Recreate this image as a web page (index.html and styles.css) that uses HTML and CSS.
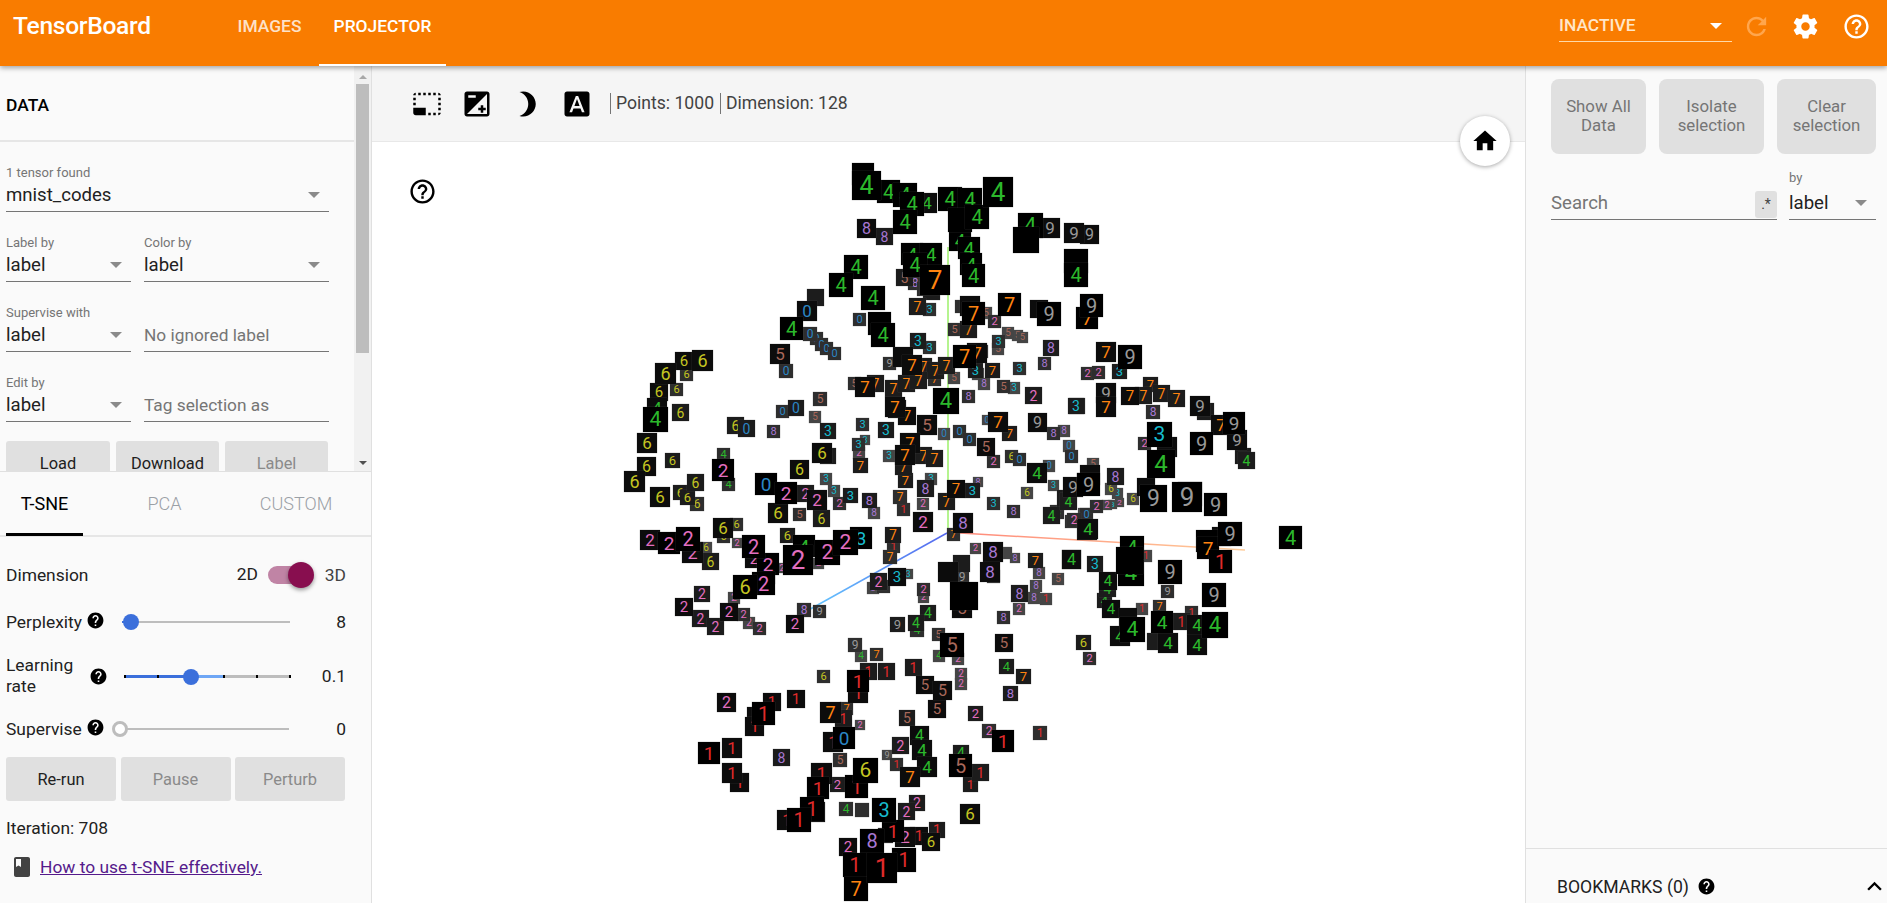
FILE: index.html
```html
<!DOCTYPE html>
<html lang="en">
<head>
    <meta charset="UTF-8">
    <title>TensorBoard</title>
    <link rel="stylesheet" href="styles.css">
</head>
<body>

<div class="app">
    <!-- top bar -->
    <header class="topbar">
        <div class="logo">TensorBoard</div>
        <a class="top-tab">IMAGES</a>
        <a class="top-tab active">PROJECTOR</a>
        <div class="top-right">
            <div class="run-select">
                <span>INACTIVE</span>
                <i class="caret caret-white"></i>
            </div>
            <svg class="icon-top refresh" viewBox="0 0 24 24"><path d="M17.65 6.35C16.2 4.9 14.21 4 12 4c-4.42 0-7.99 3.58-7.99 8s3.57 8 7.99 8c3.73 0 6.84-2.55 7.73-6h-2.08c-.82 2.33-3.04 4-5.65 4-3.31 0-6-2.69-6-6s2.69-6 6-6c1.66 0 3.14.69 4.22 1.78L13 11h7V4l-2.35 2.35z"/></svg>
            <svg class="icon-top" viewBox="0 0 24 24"><path d="M19.43 12.98c.04-.32.07-.64.07-.98s-.03-.66-.07-.98l2.11-1.65c.19-.15.24-.42.12-.64l-2-3.46c-.12-.22-.39-.3-.61-.22l-2.49 1c-.52-.4-1.08-.73-1.69-.98l-.38-2.65C14.46 2.18 14.25 2 14 2h-4c-.25 0-.46.18-.49.42l-.38 2.65c-.61.25-1.17.59-1.69.98l-2.49-1c-.23-.09-.49 0-.61.22l-2 3.46c-.13.22-.07.49.12.64l2.11 1.65c-.04.32-.07.65-.07.98s.03.66.07.98l-2.11 1.65c-.19.15-.24.42-.12.64l2 3.46c.12.22.39.3.61.22l2.49-1c.52.4 1.08.73 1.69.98l.38 2.65c.03.24.24.42.49.42h4c.25 0 .46-.18.49-.42l.38-2.65c.61-.25 1.17-.59 1.69-.98l2.49 1c.23.09.49 0 .61-.22l2-3.46c.12-.22.07-.49-.12-.64l-2.11-1.65zM12 15.5c-1.93 0-3.5-1.57-3.5-3.5s1.57-3.5 3.5-3.5 3.5 1.57 3.5 3.5-1.57 3.5-3.5 3.5z"/></svg>
            <svg class="icon-top" viewBox="0 0 24 24"><path d="M11 18h2v-2h-2v2zm1-16C6.48 2 2 6.48 2 12s4.48 10 10 10 10-4.48 10-10S17.52 2 12 2zm0 18c-4.41 0-8-3.59-8-8s3.59-8 8-8 8 3.59 8 8-3.59 8-8 8zm0-14c-2.21 0-4 1.79-4 4h2c0-1.1.9-2 2-2s2 .9 2 2c0 2-3 1.75-3 5h2c0-2.25 3-2.5 3-5 0-2.21-1.79-4-4-4z"/></svg>
        </div>
    </header>

    <main class="main">
        <!-- left panel -->
        <aside class="left">
            <section class="data-section">
                <div class="data-body">
                    <div class="data-title">DATA</div>
                    <div class="fields">
                        <div class="field field-wide">
                            <label>1 tensor found</label>
                            <div class="value">mnist_codes<i class="caret"></i></div>
                        </div>
                        <div class="field-row">
                            <div class="field">
                                <label>Label by</label>
                                <div class="value">label<i class="caret"></i></div>
                            </div>
                            <div class="field">
                                <label>Color by</label>
                                <div class="value">label<i class="caret"></i></div>
                            </div>
                        </div>
                        <div class="field-row">
                            <div class="field">
                                <label>Supervise with</label>
                                <div class="value">label<i class="caret"></i></div>
                            </div>
                            <div class="field">
                                <label>&nbsp;</label>
                                <div class="value placeholder">No ignored label</div>
                            </div>
                        </div>
                        <div class="field-row">
                            <div class="field">
                                <label>Edit by</label>
                                <div class="value">label<i class="caret"></i></div>
                            </div>
                            <div class="field">
                                <label>&nbsp;</label>
                                <div class="value placeholder">Tag selection as</div>
                            </div>
                        </div>
                        <div class="data-buttons">
                            <button>Load</button>
                            <button>Download</button>
                            <button class="disabled">Label</button>
                        </div>
                    </div>
                </div>
                <div class="scrollbar">
                    <i class="arrow-up"></i>
                    <div class="thumb"></div>
                    <i class="arrow-down"></i>
                </div>
            </section>

            <section class="tsne-section">
                <div class="algo-tabs">
                    <div class="algo-tab active">T-SNE</div>
                    <div class="algo-tab">PCA</div>
                    <div class="algo-tab tab-custom">CUSTOM</div>
                </div>

                <div class="row row-dimension">
                    <span class="row-label">Dimension</span>
                    <span class="dim-2d">2D</span>
                    <div class="toggle"><i class="toggle-knob"></i></div>
                    <span class="dim-3d">3D</span>
                </div>

                <div class="row row-perplexity">
                    <span class="row-label">Perplexity</span>
                    <svg class="icon-help" viewBox="0 0 24 24"><use href="#help-filled"/></svg>
                    <div class="slider slider-perplexity"><i class="fill"></i><i class="knob"></i></div>
                    <span class="row-value">8</span>
                </div>

                <div class="row row-learning">
                    <span class="row-label">Learning rate</span>
                    <svg class="icon-help" viewBox="0 0 24 24"><use href="#help-filled"/></svg>
                    <div class="slider slider-learning">
                        <i class="fill"></i><i class="fill-light"></i>
                        <i class="tick t0"></i><i class="tick t1"></i><i class="tick t3"></i><i class="tick t4"></i><i class="tick t5"></i>
                        <i class="knob"></i>
                    </div>
                    <span class="row-value">0.1</span>
                </div>

                <div class="row row-supervise">
                    <span class="row-label">Supervise</span>
                    <svg class="icon-help" viewBox="0 0 24 24"><use href="#help-filled"/></svg>
                    <div class="slider slider-supervise"><i class="knob"></i></div>
                    <span class="row-value">0</span>
                </div>

                <div class="tsne-buttons">
                    <button>Re-run</button>
                    <button class="disabled">Pause</button>
                    <button class="disabled">Perturb</button>
                </div>

                <div class="iteration">Iteration: 708</div>
                <div class="howto">
                    <svg class="icon-book" viewBox="0 0 24 24"><path d="M18 2H6c-1.1 0-2 .9-2 2v16c0 1.1.9 2 2 2h12c1.1 0 2-.9 2-2V4c0-1.1-.9-2-2-2zM6 4h5v8l-2.5-1.5L6 12V4z"/></svg>
                    <a href="#">How to use t-SNE effectively.</a>
                </div>
            </section>
        </aside>

        <!-- center view -->
        <section class="center">
            <div class="toolbar">
                <svg class="icon-tool" viewBox="0 0 24 24"><path d="M23 15h-2v2h2v-2zm0-4h-2v2h2v-2zm0 8h-2v2c1 0 2-1 2-2zM15 3h-2v2h2V3zm8 4h-2v2h2V7zm-2-4v2h2c0-1-1-2-2-2zM3 21h8v-6H1v4c0 1.1.9 2 2 2zM3 7H1v2h2V7zm12 12h-2v2h2v-2zm4-16h-2v2h2V3zm0 16h-2v2h2v-2zM3 3C2 3 1 4 1 5h2V3zm0 8H1v2h2v-2zm8-8H9v2h2V3zM7 3H5v2h2V3z"/></svg>
                <svg class="icon-tool" viewBox="0 0 24 24"><path d="M15 17v2h2v-2h2v-2h-2v-2h-2v2h-2v2h2zm5-15H4c-1.1 0-2 .9-2 2v16c0 1.1.9 2 2 2h16c1.1 0 2-.9 2-2V4c0-1.1-.9-2-2-2zM5 5h6v2H5V5zm15 15H4L20 4v16z"/></svg>
                <svg class="icon-tool" viewBox="0 0 24 24"><path d="M9 2c-1.05 0-2.05.16-3 .46 4.06 1.27 7 5.06 7 9.54 0 4.48-2.94 8.27-7 9.54.95.3 1.95.46 3 .46 5.52 0 10-4.48 10-10S14.52 2 9 2z"/></svg>
                <svg class="icon-tool" viewBox="0 0 24 24"><path d="M9.93 13.5h4.14L12 7.98zM20 2H4c-1.1 0-2 .9-2 2v16c0 1.1.9 2 2 2h16c1.1 0 2-.9 2-2V4c0-1.1-.9-2-2-2zm-4.05 16.5l-1.14-3H9.17l-1.12 3H5.96l5.11-13h1.86l5.11 13h-2.09z"/></svg>
                <div class="stats">
                    <span class="stat">Points: 1000</span>
                    <span class="stat">Dimension: 128</span>
                </div>
            </div>

            <div class="scatter" id="scatter">
                <svg class="axes" viewBox="372 142 1153 761">
                    <defs>
                        <linearGradient id="axis-z" gradientUnits="userSpaceOnUse" x1="947" y1="533" x2="805" y2="612">
                            <stop offset="0" stop-color="#5566ee"/>
                            <stop offset="1" stop-color="#66ccff"/>
                        </linearGradient>
                        <linearGradient id="axis-x" gradientUnits="userSpaceOnUse" x1="960" y1="533" x2="1245" y2="550">
                            <stop offset="0" stop-color="#ff8a7a"/>
                            <stop offset="1" stop-color="#ffcc99"/>
                        </linearGradient>
                    </defs>
                    <line x1="948" y1="247" x2="948" y2="533" stroke="#9cf06a" stroke-width="1.5"/>
                    <line x1="947" y1="533" x2="805" y2="612" stroke="url(#axis-z)" stroke-width="1.5"/>
                    <line x1="960" y1="533" x2="1245" y2="550" stroke="url(#axis-x)" stroke-width="1.5"/>
                </svg>
            </div>

            <svg class="canvas-help" viewBox="0 0 24 24"><path d="M11 18h2v-2h-2v2zm1-16C6.48 2 2 6.48 2 12s4.48 10 10 10 10-4.48 10-10S17.52 2 12 2zm0 18c-4.41 0-8-3.59-8-8s3.59-8 8-8 8 3.59 8 8-3.59 8-8 8zm0-14c-2.21 0-4 1.79-4 4h2c0-1.1.9-2 2-2s2 .9 2 2c0 2-3 1.75-3 5h2c0-2.25 3-2.5 3-5 0-2.21-1.79-4-4-4z"/></svg>
            <div class="home-btn">
                <svg viewBox="0 0 24 24"><path d="M10 20v-6h4v6h5v-8h3L12 3 2 12h3v8z"/></svg>
            </div>
        </section>

        <!-- right panel -->
        <aside class="right">
            <div class="right-buttons">
                <button class="btn-show">Show All Data</button>
                <button class="btn-isolate">Isolate selection</button>
                <button class="btn-clear">Clear selection</button>
            </div>
            <div class="search-row">
                <div class="search">
                    <span class="placeholder">Search</span>
                    <span class="regex">.*</span>
                </div>
                <div class="field search-by">
                    <label>by</label>
                    <div class="value">label<i class="caret"></i></div>
                </div>
            </div>
            <div class="bookmarks">
                <span>BOOKMARKS (0)</span>
                <svg class="icon-help" viewBox="0 0 24 24"><use href="#help-filled"/></svg>
                <svg class="chevron" viewBox="0 0 24 24"><path d="M12 8l-6 6 1.41 1.41L12 10.83l4.59 4.58L18 14z"/></svg>
            </div>
        </aside>
    </main>
</div>

<svg class="defs-only"><defs>
    <path id="help-filled" d="M12 2C6.48 2 2 6.48 2 12s4.48 10 10 10 10-4.48 10-10S17.52 2 12 2zm1 17h-2v-2h2v2zm2.07-7.75l-.9.92C13.45 12.9 13 13.5 13 15h-2v-.5c0-1.1.45-2.1 1.17-2.83l1.24-1.26c.37-.36.59-.86.59-1.41 0-1.1-.9-2-2-2s-2 .9-2 2H8c0-2.21 1.79-4 4-4s4 1.79 4 4c0 .88-.36 1.68-.93 2.25z"/>
</defs></svg>

<script src="script.js"></script>
</body>
</html>
```

FILE: styles.css
```css
* {
    box-sizing: border-box;
}

html, body {
    margin: 0;
    padding: 0;
    height: 100%;
    overflow: hidden;
}

body {
    font-family: Roboto, 'Liberation Sans', sans-serif;
    font-size: 17.4px;
    color: #212121;
    background: #fff;
}

button {
    font: inherit;
    font-size: 16.4px;
    border: none;
    background: #e0e0e0;
    color: #212121;
    border-radius: 3px;
}

button.disabled {
    color: #8a8a8a;
}

.defs-only {
    position: absolute;
    width: 0;
    height: 0;
}

.app {
    height: 903px;
    display: flex;
    flex-direction: column;
}

/* top bar */
.topbar {
    height: 66px;
    flex: none;
    display: flex;
    background: #f97c00;
    color: #fff;
    box-shadow: 0 2px 5px rgba(0, 0, 0, 0.35);
    position: relative;
    z-index: 5;
}

.logo {
    width: 220px;
    padding: 11px 0 0 13px;
    font-size: 24.6px;
    font-weight: 500;
    line-height: 30px;
    letter-spacing: -0.3px;
}

.top-tab {
    width: 99px;
    padding-top: 14px;
    font-weight: 500;
    line-height: 24px;
    text-align: center;
    color: rgba(255, 255, 255, 0.8);
}

.top-tab.active {
    width: 127px;
    color: #fff;
    border-bottom: 2px solid #fff;
}

.top-right {
    margin-left: auto;
    padding-right: 16px;
    display: flex;
    align-items: flex-start;
}

.run-select {
    width: 173px;
    height: 42px;
    padding-top: 14px;
    line-height: 22px;
    font-weight: 500;
    border-bottom: 1px solid #ffd9a8;
    display: flex;
    justify-content: space-between;
    color: #ffe6c8;
    margin-right: 10px;
}

.icon-top {
    width: 29px;
    height: 29px;
    margin: 12px 0 0 22px;
    fill: #fff;
}

.icon-top.refresh {
    margin-left: 0;
    fill: #ffa64d;
    margin-right: -2px;
}

.caret {
    display: block;
    width: 0;
    height: 0;
    margin-top: 9px;
    margin-right: 9px;
    border-left: 6px solid transparent;
    border-right: 6px solid transparent;
    border-top: 6px solid #8a8a8a;
}

.caret-white {
    margin-right: 10px;
    border-top-color: #fff;
}

.main {
    flex: 1;
    min-height: 0;
    display: flex;
}

/* left panel */
.left {
    width: 372px;
    flex: none;
    display: flex;
    flex-direction: column;
    background: #fafafa;
    border-right: 1px solid #e0e0e0;
}

.data-section {
    height: 406px;
    flex: none;
    display: flex;
    overflow: hidden;
    border-bottom: 1px solid #e0e0e0;
}

.data-body {
    width: 354px;
    flex: none;
}

.data-title {
    height: 76px;
    padding: 27px 0 0 6px;
    font-weight: 500;
    line-height: 24px;
    color: #000;
    border-bottom: 2px solid #e6e6e6;
}

.fields {
    padding: 22px 25px 0 6px;
    display: flex;
    flex-direction: column;
    gap: 22px;
}

.field-row {
    display: grid;
    grid-template-columns: 125px 185px;
    gap: 13px;
}

.field label {
    display: block;
    height: 17px;
    font-size: 13px;
    line-height: 17px;
    color: #757575;
}

.value {
    height: 31px;
    font-size: 18.6px;
    line-height: 28px;
    color: #212121;
    border-bottom: 1px solid #757575;
    display: flex;
    justify-content: space-between;
}

.value.placeholder {
    font-size: 17.3px;
}

.value .caret {
    margin-top: 11px;
}

.placeholder {
    color: #757575;
}

.data-buttons {
    display: grid;
    grid-template-columns: 104px 103px 103px;
    gap: 6px;
    margin-top: -3px;
}

.data-buttons button {
    height: 44px;
}

.scrollbar {
    width: 17px;
    margin-left: 0;
    background: #f1f1f1;
    position: relative;
    display: flex;
    flex-direction: column;
    align-items: center;
}

.thumb {
    width: 13px;
    height: 269px;
    margin-top: 5px;
    background: #bdbdbd;
}

.arrow-up, .arrow-down {
    display: block;
    width: 0;
    height: 0;
    border-left: 4px solid transparent;
    border-right: 4px solid transparent;
}

.arrow-up {
    margin-top: 9px;
    border-bottom: 4px solid #a8a8a8;
}

.arrow-down {
    margin-top: 108px;
    border-top: 4px solid #505050;
}

/* t-sne section */
.tsne-section {
    flex: 1;
    min-height: 0;
}

.algo-tabs {
    height: 65px;
    padding-left: 6px;
    display: flex;
    gap: 43px;
    border-bottom: 2px solid #e6e6e6;
}

.algo-tab {
    width: 77px;
    height: 64px;
    padding-top: 21px;
    line-height: 22px;
    font-size: 18px;
    text-align: center;
    color: #9aa0a6;
    font-weight: 300;
}

.algo-tab.active {
    color: #000;
    font-weight: 400;
    border-bottom: 3px solid #000;
}

.algo-tab.tab-custom {
    width: 100px;
}

.row {
    display: flex;
    align-items: center;
    padding: 0 25px 0 6px;
}

.row-dimension {
    height: 40px;
    margin-top: 18px;
}

.row-dimension .row-label {
    flex: 1;
}

.dim-2d {
    margin-bottom: 3px;
}

.dim-3d {
    color: #424242;
}

.toggle {
    width: 42px;
    height: 18px;
    margin: 0 15px 0 10px;
    background: #c084a5;
    border-radius: 9px;
    position: relative;
}

.toggle-knob {
    position: absolute;
    top: -4px;
    right: -4px;
    width: 26px;
    height: 26px;
    border-radius: 50%;
    background: #880e4f;
    box-shadow: 0 2px 4px rgba(0, 0, 0, 0.4);
}

.icon-help {
    width: 19px;
    height: 19px;
    flex: none;
    fill: #000;
}

.row-value {
    flex: 1;
    text-align: right;
}

.slider {
    height: 2px;
    background: #bdbdbd;
    position: relative;
    flex: none;
}

.slider i {
    display: block;
    position: absolute;
}

.knob {
    width: 16px;
    height: 16px;
    top: -7px;
    border-radius: 50%;
    background: #3b6fdb;
}

.row-perplexity {
    height: 40px;
    margin-top: 7px;
}

.row-perplexity .icon-help {
    margin: -3px 0 0 4px;
}

.slider-perplexity {
    width: 168px;
    margin-left: 17px;
}

.slider-perplexity .fill {
    left: 0;
    top: 0;
    width: 10px;
    height: 2px;
    background: #3b6fdb;
}

.slider-perplexity .knob {
    left: 1px;
}

.row-learning {
    height: 48px;
    margin-top: 10px;
}

.row-learning .row-label {
    width: 82px;
    line-height: 21px;
    flex: none;
}

.row-learning .icon-help {
    margin-left: 1px;
}

.slider-learning {
    width: 167px;
    height: 3px;
    margin-left: 16px;
}

.slider-learning .fill {
    left: 0;
    top: 0;
    width: 67px;
    height: 3px;
    background: #3b6fdb;
}

.slider-learning .fill-light {
    left: 67px;
    top: 0;
    width: 33px;
    height: 3px;
    background: #6ea6f5;
}

.tick {
    top: 0;
    width: 2px;
    height: 3px;
    background: #000;
}

.t0 { left: 0; }
.t1 { left: 33px; }
.t3 { left: 99px; }
.t4 { left: 132px; }
.t5 { left: 165px; }

.slider-learning .knob {
    left: 59px;
    top: -6px;
}

.row-supervise {
    height: 40px;
    margin-top: 9px;
}

.row-supervise .icon-help {
    margin: -3px 0 0 4px;
}

.slider-supervise {
    width: 170px;
    margin-left: 14px;
}

.slider-supervise .knob {
    left: -7px;
    top: -7px;
    background: #fff;
    border: 3px solid #bdbdbd;
}

.tsne-buttons {
    display: grid;
    grid-template-columns: 110px 110px 110px;
    gap: 4px;
    column-gap: 4.5px;
    margin: 8px 0 0 6px;
}

.tsne-buttons button {
    height: 44px;
}

.iteration {
    margin: 13px 0 0 6px;
    line-height: 28px;
}

.howto {
    display: flex;
    align-items: center;
    margin: 11px 0 0 10px;
    line-height: 28px;
}

.howto a {
    color: #551a8b;
    margin-left: 6px;
}

.icon-book {
    width: 24px;
    height: 24px;
    fill: #424242;
}

/* center */
.center {
    flex: 1;
    min-width: 0;
    position: relative;
    display: flex;
    flex-direction: column;
    overflow: hidden;
}

.toolbar {
    height: 76px;
    flex: none;
    padding: 0 0 0 40px;
    background: #f5f5f5;
    border-bottom: 1px solid #e8e8e8;
    display: flex;
    align-items: center;
    gap: 20px;
}

.icon-tool {
    width: 30px;
    height: 30px;
    fill: #000;
}

.stats {
    display: flex;
    margin-left: -2px;
    font-size: 17.6px;
    color: #424242;
}

.stat {
    height: 21px;
    line-height: 21px;
    padding: 0 6px 0 5px;
    border-left: 1px solid #757575;
}

.scatter {
    flex: 1;
    position: relative;
    background: #fff;
}

.axes {
    position: absolute;
    left: 0;
    top: 0;
    width: 1153px;
    height: 761px;
}

.sprite {
    position: absolute;
    display: flex;
    align-items: center;
    justify-content: center;
    font-family: Roboto, sans-serif;
    font-weight: 400;
    line-height: 1;
    box-shadow: 0 0 1px rgba(90, 90, 90, 0.8);
    overflow: hidden;
}

.canvas-help {
    position: absolute;
    left: 36px;
    top: 111px;
    width: 29px;
    height: 29px;
    fill: #000;
}

.home-btn {
    position: absolute;
    right: 15px;
    top: 50px;
    width: 50px;
    height: 50px;
    border-radius: 50%;
    background: #fff;
    box-shadow: 0 1px 4px rgba(0, 0, 0, 0.35);
    display: flex;
    align-items: center;
    justify-content: center;
}

.home-btn svg {
    width: 28px;
    height: 28px;
    fill: #000;
}

/* right panel */
.right {
    width: 362px;
    flex: none;
    background: #fafafa;
    border-left: 1px solid #e0e0e0;
    display: flex;
    flex-direction: column;
}

.right-buttons {
    display: flex;
    gap: 13px;
    padding: 13px 0 0 25px;
}

.right-buttons button {
    height: 75px;
    padding: 0 12px 2px;
    line-height: 19px;
    font-size: 16.8px;
    border-radius: 8px;
    color: #757575;
}

.btn-show { width: 95px; }
.btn-isolate { width: 105px; }
.btn-clear { width: 99px; }

.search-row {
    display: flex;
    gap: 12px;
    padding: 15px 0 0 25px;
}

.search {
    width: 226px;
    height: 38px;
    margin-top: 13px;
    font-size: 18.6px;
    border-bottom: 1px solid #757575;
    display: flex;
    justify-content: space-between;
    align-items: flex-end;
    line-height: 32px;
}

.regex {
    width: 22px;
    height: 27px;
    margin-bottom: 1px;
    background: #e0e0e0;
    border-radius: 3px;
    font-size: 14px;
    line-height: 27px;
    text-align: center;
    color: #424242;
}

.search-by {
    width: 87px;
    margin-top: 3px;
}

.search-by label {
    margin-top: -3px;
    height: 20px;
}

.bookmarks {
    margin-top: auto;
    height: 55px;
    padding: 21px 0 0 31px;
    border-top: 1px solid #e0e0e0;
    display: flex;
    align-items: center;
    font-size: 17.6px;
    color: #212121;
}

.bookmarks .icon-help {
    margin-left: 8px;
}

.chevron {
    width: 29px;
    height: 29px;
    margin-left: auto;
    margin-right: -2px;
    fill: #000;
}
```

FILE: script.js
```javascript
// projected mnist sprites: x, y, size, digit (page coordinates)
const points = [
    [852,163,22,' '],[852,171,29,4],[877,180,23,4],[893,183,24,4],[900,192,24,4],[917,193,20,4],[938,187,24,4],[958,188,24,4],[983,177,30,4],
    [893,210,24,4],[948,208,24,' '],[965,205,24,4],[857,219,19,8],[876,228,17,8],[1018,213,25,4],[1013,227,26,' '],[1040,218,20,9],[1064,223,20,9],[1080,225,19,9],
    [1064,249,24,' '],[1064,263,24,4],[949,229,22,4],[958,237,22,4],[960,253,22,4],[962,264,23,4],[901,243,22,4],[920,243,22,4],[903,253,24,4],[920,265,30,7],
    [896,269,17,5],[908,276,14,8],[917,282,14,5],[923,283,17,' '],[844,255,24,4],[829,273,24,4],[861,286,24,4],[807,289,17,' '],[797,301,20,0],[780,317,23,4],
    [770,344,20,5],[779,364,14,0],[803,327,14,0],[810,332,13,0],[815,338,13,0],[820,342,13,0],[828,347,13,0],[853,313,13,0],[909,298,17,7],[923,303,13,3],
    [868,312,23,' '],[871,323,24,4],[955,300,13,' '],[960,296,20,' '],[962,302,23,7],[980,307,12,5],[988,315,13,2],[998,293,23,7],[1030,300,18,' '],[1037,302,24,9],
    [1080,294,23,9],[1076,307,22,7],[948,323,13,5],[960,321,17,7],[992,335,13,3],[992,343,12,5],[1002,327,12,5],[1012,330,11,5],[1017,332,11,5],
    [1043,340,16,8],[1038,357,13,8],[1013,362,13,3],[1081,367,13,2],[1092,366,13,2],[1112,364,15,3],[910,333,16,3],[923,341,13,3],[893,347,20,' '],[883,357,13,9],
    [902,355,20,7],[915,358,17,7],[927,362,17,7],[938,357,17,7],[953,345,23,7],[967,343,20,7],[975,345,13,7],[985,363,15,7],[968,363,15,3],[972,368,12,3],
    [848,377,13,5],[855,377,20,7],[867,375,17,7],[885,380,17,7],[898,375,17,7],[910,372,17,7],[928,373,13,7],[948,372,12,5],[933,388,26,4],[962,390,13,8],
    [978,378,12,8],[997,380,13,5],[1008,382,12,3],[1025,387,17,2],[1069,398,16,3],[885,397,20,7],[888,400,18,3],[898,407,18,7],[917,415,20,5],[813,392,14,5],
    [776,405,13,0],[788,400,16,0],[809,411,12,5],[820,423,16,3],[727,417,17,6],[738,420,17,0],[767,425,13,8],[856,418,13,3],[878,422,16,3],[953,425,13,0],
    [963,433,13,0],[938,428,12,0],[988,412,20,7],[1002,426,15,7],[982,415,10,0],[1028,413,19,9],[1047,427,13,8],[1058,425,12,8],[1063,440,12,0],[1065,450,13,0],
    [852,438,13,3],[860,435,10,3],[853,447,12,2],[812,443,20,6],[820,448,16,6],[900,433,20,7],[895,445,20,7],[915,447,17,7],[926,450,17,7],[895,458,17,7],
    [883,450,12,3],[853,458,15,7],[977,438,18,5],[987,455,13,2],[1005,450,13,6],[1013,453,13,0],[1027,463,20,4],[1043,460,12,0],[790,460,19,6],[820,473,12,3],
    [898,473,15,7],[917,480,17,8],[925,473,12,3],[675,352,18,6],[692,350,21,6],[655,363,21,6],[680,368,13,6],[670,383,13,6],[650,383,18,6],[647,398,20,4],
    [643,407,25,4],[672,404,17,6],[637,433,20,6],[665,453,15,6],[637,457,19,6],[624,471,21,6],[650,487,20,6],[687,474,17,6],[673,485,15,6],[680,490,15,6],[690,497,14,6],
    [717,448,13,4],[712,459,22,2],[722,478,13,4],[755,473,22,0],[775,482,22,2],[797,485,17,2],[807,490,20,2],[768,503,20,6],[828,485,12,3],[843,488,15,3],
    [862,493,15,8],[868,507,12,8],[833,497,13,2],[793,508,13,5],[813,510,17,6],[893,490,14,7],[897,503,13,1],[917,498,12,2],[913,512,20,2],[947,480,18,7],
    [938,493,17,7],[953,513,20,8],[965,483,15,3],[973,477,10,8],[987,497,13,3],[1007,505,13,8],[1021,487,12,6],[1048,480,11,3],[1063,477,20,9],[1077,473,20,9],
    [1057,490,17,4],[1043,507,17,4],[1067,513,14,2],[1080,508,13,0],[1077,520,20,4],[713,518,20,6],[730,518,13,6],[640,530,20,2],[658,532,22,2],[676,527,24,2],
    [682,542,21,2],[702,553,17,6],[700,542,12,6],[717,530,13,6],[732,538,10,2],[742,535,23,2],[745,550,18,2],[757,553,22,2],[777,563,10,2],[758,567,17,2],
    [733,575,24,6],[752,572,23,2],[780,528,15,6],[793,535,22,4],[783,545,30,2],[813,558,11,2],[815,540,25,2],[833,530,25,2],[850,527,22,3],[885,527,16,7],
    [887,540,13,1],[883,550,14,7],[888,568,18,3],[903,569,10,3],[870,573,17,2],[867,582,12,8],[877,580,13,6],[947,528,13,7],[970,543,11,2],[983,542,20,8],
    [1000,547,12,' '],[1010,553,10,8],[1028,553,15,7],[1033,567,12,8],[1052,573,12,5],[1062,550,19,4],[1087,556,16,3],[938,562,20,' '],[953,555,17,' '],[955,570,14,9],
    [980,562,20,8],[987,570,13,' '],[950,582,28,' '],[952,598,20,5],[1011,585,17,8],[1030,580,12,8],[1028,592,12,8],[1040,593,12,1],[1013,603,12,2],[997,611,13,8],
    [917,583,13,2],[918,592,11,2],[920,605,16,4],[908,615,16,4],[910,623,14,4],[890,617,15,9],[694,586,16,2],[675,598,18,2],[692,610,17,2],[707,618,17,2],
    [720,603,18,2],[728,592,12,2],[737,608,13,2],[743,617,12,2],[753,622,13,2],[786,615,18,2],[797,603,14,8],[813,605,13,9],[848,638,14,9],[855,650,12,4],
    [870,648,13,7],[817,670,13,6],[860,663,17,1],[878,663,17,1],[847,670,22,1],[848,683,20,1],[905,659,17,1],[916,676,18,5],[933,681,19,5],[928,700,18,5],
    [955,668,12,2],[955,678,12,2],[932,628,13,5],[940,633,24,5],[933,650,12,4],[952,653,12,2],[995,634,18,5],[999,659,15,4],[1016,669,15,7],[1003,686,15,8],
    [1076,635,15,6],[1083,652,13,2],[717,693,19,2],[763,693,18,1],[752,702,23,1],[747,707,18,1],[745,717,19,1],[787,690,18,1],[820,702,21,7],[840,702,13,7],
    [835,710,17,1],[855,720,10,2],[833,727,22,0],[823,732,20,1],[698,742,22,1],[722,738,20,1],[722,763,20,1],[730,773,19,1],[773,749,17,8],[833,753,14,5],
    [811,763,21,1],[807,777,22,1],[800,797,24,1],[777,810,20,1],[787,808,24,1],[805,802,20,1],[853,758,25,6],[845,775,23,1],[830,777,15,2],[839,802,14,4],
    [855,803,14,' '],[872,798,24,3],[898,803,17,2],[909,795,16,2],[899,710,16,5],[910,726,19,4],[912,740,20,4],[917,757,20,4],[900,767,20,7],[892,737,17,2],
    [882,750,10,9],[890,758,13,1],[949,754,23,5],[953,745,16,4],[972,764,17,1],[963,777,15,1],[960,804,20,6],[968,706,15,2],[982,724,14,2],[992,730,22,1],
    [1033,726,14,1],[882,820,22,1],[895,827,20,2],[910,827,18,1],[929,822,16,1],[922,833,18,6],[860,829,24,8],[839,838,18,2],[878,828,15,7],[843,853,24,1],
    [863,857,20,1],[867,853,30,1],[892,848,24,1],[844,877,24,7],[1096,342,20,7],[1118,345,24,9],[1096,383,20,9],[1096,397,20,7],[1068,398,16,3],[1121,387,18,7],
    [1135,387,17,7],[1153,385,17,7],[1168,390,17,7],[1143,377,15,7],[1146,405,14,8],[1190,396,20,9],[1197,403,17,' '],[1211,415,20,7],[1223,412,22,9],[1227,430,20,9],
    [1235,448,16,' '],[1238,452,17,4],[1190,432,23,9],[1147,422,25,3],[1138,437,13,2],[1157,437,20,' '],[1147,450,28,4],[1137,478,18,' '],[1140,485,27,9],[1172,482,30,9],
    [1178,482,24,' '],[1204,493,23,9],[1127,493,12,6],[1107,468,17,8],[1087,458,12,5],[1080,465,20,' '],[1077,473,23,9],[1105,483,12,6],[1112,488,11,3],[1090,500,13,2],
    [1102,500,10,2],[1108,500,9,3],[1115,498,9,2],[1060,493,17,4],[1050,505,14,4],[1078,508,12,0],[1065,515,13,2],[1078,519,20,4],[1062,550,19,4],[1120,536,24,4],
    [1116,547,27,' '],[1118,560,26,4],[1140,550,12,1],[1196,530,22,' '],[1218,522,24,9],[1212,527,19,9],[1197,537,22,7],[1209,550,23,1],[1279,526,23,4],[1158,560,24,9],
    [1161,585,13,9],[1099,572,18,4],[1099,580,17,4],[1097,593,15,4],[1102,600,18,4],[1119,608,18,' '],[1120,617,25,4],[1110,626,20,4],[1136,603,12,1],[1153,600,13,7],
    [1151,611,22,4],[1147,633,17,' '],[1158,633,20,4],[1173,613,17,1],[1185,606,13,1],[1187,615,20,4],[1187,635,20,4],[1202,583,24,9],[1202,612,26,4]
];

const digitColors = {
    0: '#2b86c5', 1: '#e02b2b', 2: '#e36fc0', 3: '#17bccf', 4: '#2cb82c',
    5: '#a8685a', 6: '#c4c522', 7: '#ff8410', 8: '#a878d4', 9: '#999999'
};

// the scatter starts below the toolbar, right of the left panel
const originX = 372;
const originY = 142;

// smaller sprites are further from the camera: they fade towards grey
function spriteBackground(size) {
    if (size >= 22) return '#000';
    if (size >= 18) return '#0c0c0c';
    if (size >= 15) return '#1c1c1c';
    if (size >= 13) return '#2e2e2e';
    return '#454545';
}

const scatter = document.getElementById('scatter');

points.slice().sort(function(a, b) {
    return a[2] - b[2];
}).forEach(function(point) {
    const sprite = document.createElement('div');
    sprite.classList.add('sprite');
    sprite.style.left = (point[0] - originX) + 'px';
    sprite.style.top = (point[1] - originY) + 'px';
    sprite.style.width = point[2] + 'px';
    sprite.style.height = point[2] + 'px';
    sprite.style.fontSize = Math.round(point[2] * 0.85) + 'px';
    sprite.style.background = spriteBackground(point[2]);
    sprite.style.color = digitColors[point[3]] || '#000';
    sprite.textContent = point[3];
    scatter.appendChild(sprite);
});
```
